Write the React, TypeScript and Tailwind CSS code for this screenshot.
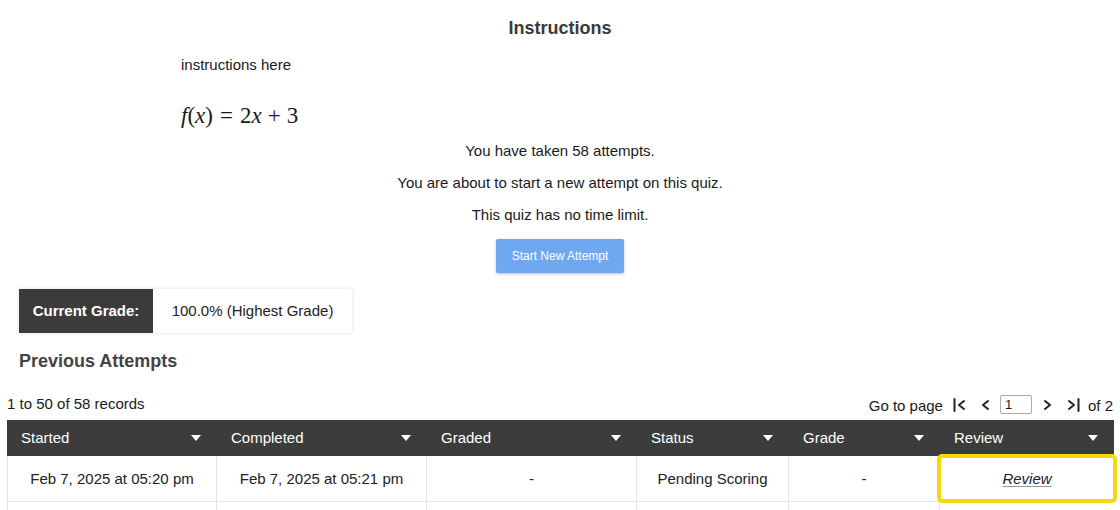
import React from "react";

const cols = [
  { label: "Started", w: "w-[210px]", value: "Feb 7, 2025 at 05:20 pm" },
  { label: "Completed", w: "w-[210px]", value: "Feb 7, 2025 at 05:21 pm" },
  { label: "Graded", w: "w-[210px]", value: "-" },
  { label: "Status", w: "w-[152px]", value: "Pending Scoring" },
  { label: "Grade", w: "w-[151px]", value: "-" },
  { label: "Review", w: "flex-1", value: "Review" },
];

function Caret() {
  return (
    <svg width="10" height="6" viewBox="0 0 10 6" className="shrink-0">
      <path d="M0 0 L10 0 L5 6 Z" fill="#ffffff" />
    </svg>
  );
}

function PagerIcon({ kind }: { kind: "first" | "prev" | "next" | "last" }) {
  const paths = {
    first: "M1.5 1 V13 M11 3 L6 7 L11 11",
    prev: "M7 3 L2 7 L7 11",
    next: "M1 3 L6 7 L1 11",
    last: "M11.5 1 V13 M2 3 L7 7 L2 11",
  };
  const w = kind === "first" || kind === "last" ? 13 : 8;
  return (
    <svg width={w} height="14" viewBox={`0 0 ${w} 14`} className="shrink-0">
      <path d={paths[kind]} stroke="#222" strokeWidth="2" fill="none" strokeLinecap="round" strokeLinejoin="round" />
    </svg>
  );
}

export default function App() {
  return (
    <div className="w-[1120px] h-[510px] overflow-hidden bg-white text-[#1a1a1a] font-['Liberation_Sans',Arial,sans-serif]">
      {/* Instructions */}
      <div className="pt-[17px]">
        <h2 className="text-center text-[18px] font-bold text-[#3a3a3a] leading-[22px]">Instructions</h2>
        <div className="mx-auto w-[758px] pt-[16px]">
          <p className="text-[15px] leading-[20px]">instructions here</p>
          <p className="pt-[29px] text-[23px] leading-[24px] font-['Liberation_Serif',serif] whitespace-nowrap">
            <i>f</i>(<i>x</i>)<span className="px-[7px]">=</span>2<i>x</i>
            <span className="px-[6px]">+</span>3
          </p>
        </div>
        <div className="pt-[13px] flex flex-col items-center gap-[12px] text-[15px] leading-[20px]">
          <p>You have taken 58 attempts.</p>
          <p>You are about to start a new attempt on this quiz.</p>
          <p>This quiz has no time limit.</p>
        </div>
        <div className="flex justify-center pt-[14px]">
          <button className="w-[128px] h-[34px] bg-[#6fa8ef] text-white text-[12px] rounded-[2px] shadow-[0_1px_3px_rgba(0,0,0,0.25)]">
            Start New Attempt
          </button>
        </div>
      </div>

      {/* Current grade */}
      <div className="pl-[19px] pt-[16px]">
        <div className="inline-flex h-[44px] shadow-[0_0_4px_rgba(0,0,0,0.12)]">
          <div className="w-[134px] bg-[#3b3b3b] text-white font-bold text-[15px] flex items-center justify-center">
            Current Grade:
          </div>
          <div className="w-[199px] bg-white text-[15px] flex items-center justify-center text-[#222]">
            100.0% (Highest Grade)
          </div>
        </div>
        <h3 className="pt-[17px] text-[18px] font-bold text-[#444] leading-[22px]">Previous Attempts</h3>
      </div>

      {/* Pagination */}
      <div className="px-[7px] pt-[21px] flex items-end justify-between text-[15px] leading-[20px]">
        <span className="pb-[5px]">1 to 50 of 58 records</span>
        <div className="flex items-center pb-[3px]">
          <span className="pr-[10px] pt-[3px]">Go to page</span>
          <PagerIcon kind="first" />
          <span className="w-[15px]" />
          <PagerIcon kind="prev" />
          <span className="w-[11px]" />
          <input
            defaultValue="1"
            className="w-[32px] h-[19px] border border-[#aaa] rounded-[2px] px-[4px] text-[13px] outline-none"
          />
          <span className="w-[12px]" />
          <PagerIcon kind="next" />
          <span className="w-[15px]" />
          <PagerIcon kind="last" />
          <span className="pl-[8px] pt-[3px]">of 2</span>
        </div>
      </div>

      {/* Table */}
      <div className="mx-[7px] mt-[1px] w-[1107px]">
        <div className="flex h-[36px] bg-[#3c3c3c] text-white text-[15px]">
          {cols.map((c) => (
            <div key={c.label} className={`${c.w} flex items-center justify-between pl-[14px] pr-[16px]`}>
              <span>{c.label}</span>
              <Caret />
            </div>
          ))}
        </div>
        <div className="flex h-[46px] border-b border-[#e4e4e4] text-[15px] text-[#222]">
          {cols.map((c, i) => (
            <div
              key={c.label}
              className={`${c.w} pt-[2px] flex items-center justify-center ${i < cols.length - 1 ? "border-r border-[#e4e4e4]" : ""} ${i === 0 ? "border-l border-[#e4e4e4]" : ""} ${c.label === "Review" ? "relative" : ""}`}
            >
              {c.label === "Review" ? (
                <>
                  <a className="italic underline decoration-[#999] underline-offset-2">Review</a>
                  <div className="absolute -left-[3px] -right-[3px] -top-[2px] -bottom-[2px] border-[4px] border-[#f5d90a] rounded-[5px]" />
                </>
              ) : (
                c.value
              )}
            </div>
          ))}
        </div>
        <div className="flex h-[10px]">
          {cols.map((c, i) => (
            <div
              key={c.label}
              className={`${c.w} ${i < cols.length - 1 ? "border-r border-[#e4e4e4]" : ""} ${i === 0 ? "border-l border-[#e4e4e4]" : ""}`}
            />
          ))}
        </div>
      </div>
    </div>
  );
}
